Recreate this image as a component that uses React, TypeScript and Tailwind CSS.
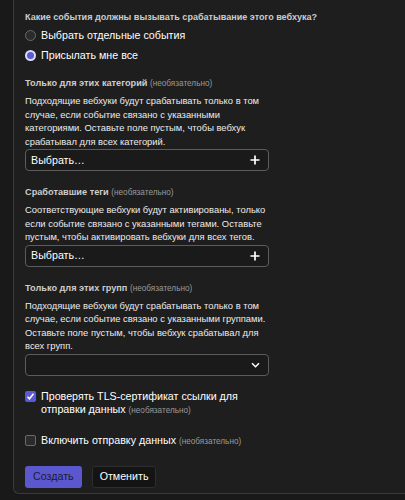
import React from "react";

const font = { fontFamily: '"Liberation Sans", Arial, sans-serif' };

function Optional() {
    return <span className="text-[8.2px] font-normal text-[#9a9a9a]">(необязательно)</span>;
}

function Radio({ checked, label }: { checked?: boolean; label: string }) {
    return (
        <label className="flex items-center gap-[5px] h-[20px]">
            {checked ? (
                <span className="w-[11px] h-[11px] rounded-full bg-[#dcdcf4] flex items-center justify-center">
                    <span className="w-[7px] h-[7px] rounded-full bg-[#5b59d8]" />
                </span>
            ) : (
                <span className="w-[11px] h-[11px] rounded-full border border-[#6a6a6a] bg-[#2b2b2d]" />
            )}
            <span className="text-[10.7px] text-white">{label}</span>
        </label>
    );
}

function Field({
    title,
    text,
    control,
    className,
}: {
    title: string;
    text: string;
    control: "plus" | "chevron";
    className: string;
}) {
    return (
        <div className={"flex flex-col " + className}>
            <div className="text-[9.2px] font-bold text-[#cccccc] leading-[12px]">
                {title} <Optional />
            </div>
            <p className="mt-[4px] text-[9.4px] leading-[13.5px] text-[#ececec]">{text}</p>
            <div className="mt-[1px] h-[22px] rounded-[4px] border border-[#5c5c5c] bg-[#1a1a1a] flex items-center justify-between pl-[5px] pr-[8px]">
                <span className="text-[10.7px] text-white">{control === "plus" ? "Выбрать…" : ""}</span>
                {control === "plus" ? (
                    <svg width="10" height="10" viewBox="0 0 10 10">
                        <path d="M5 0.5v9M0.5 5h9" stroke="white" strokeWidth="1.7" />
                    </svg>
                ) : (
                    <svg width="9" height="6" viewBox="0 0 9 6">
                        <path d="M1 1.2l3.5 3.5 3.5-3.5" fill="none" stroke="white" strokeWidth="1.5" />
                    </svg>
                )}
            </div>
        </div>
    );
}

export default function App() {
    return (
        <div className="w-[405px] h-[500px] bg-[#191919] overflow-hidden" style={font}>
            <div className="ml-[13px] h-[494px] bg-[#1e1e1e] border-l border-b border-[#3a3a3a] rounded-bl-[6px] pl-[11px] pt-[11px]">
                <div className="w-[244px] flex flex-col">
                    <div className="text-[9.05px] font-bold text-[#cccccc] leading-[12px] whitespace-nowrap">
                        Какие события должны вызывать срабатывание этого вебхука?
                    </div>
                    <div className="mt-[2px] flex flex-col">
                        <Radio label="Выбрать отдельные события" />
                        <Radio checked label="Присылать мне все" />
                    </div>
                    <Field
                        className="mt-[12px]"
                        title="Только для этих категорий"
                        text="Подходящие вебхуки будут срабатывать только в том случае, если событие связано с указанными категориями. Оставьте поле пустым, чтобы вебхук срабатывал для всех категорий."
                        control="plus"
                    />
                    <Field
                        className="mt-[15px]"
                        title="Сработавшие теги"
                        text="Соответствующие вебхуки будут активированы, только если событие связано с указанными тегами. Оставьте пустым, чтобы активировать вебхуки для всех тегов."
                        control="plus"
                    />
                    <Field
                        className="mt-[15px]"
                        title="Только для этих групп"
                        text="Подходящие вебхуки будут срабатывать только в том случае, если событие связано с указанными группами. Оставьте поле пустым, чтобы вебхук срабатывал для всех групп."
                        control="chevron"
                    />
                    <label className="mt-[14px] flex items-start gap-[5px]">
                        <span className="mt-[1px] w-[11px] h-[11px] shrink-0 rounded-[2px] bg-[#5b59d8] flex items-center justify-center">
                            <svg width="9" height="9" viewBox="0 0 9 9">
                                <path d="M1.5 4.8l2 2 4-5" fill="none" stroke="white" strokeWidth="1.5" />
                            </svg>
                        </span>
                        <span className="text-[10.7px] leading-[13px] text-white">
                            Проверять TLS-сертификат ссылки для отправки данных <Optional />
                        </span>
                    </label>
                    <label className="mt-[17px] flex items-start gap-[5px] whitespace-nowrap">
                        <span className="mt-[1px] w-[11px] h-[11px] shrink-0 rounded-[2px] border border-[#6a6a6a] bg-[#2b2b2d]" />
                        <span className="text-[10.7px] leading-[13px] text-white">
                            Включить отправку данных <Optional />
                        </span>
                    </label>
                    <div className="mt-[18px] flex gap-[10px]">
                        <button className="h-[22px] px-[8px] rounded-[3px] bg-[#5b57cf] text-[10.7px] text-[#1c1c2e]">
                            Создать
                        </button>
                        <button className="h-[22px] px-[7px] rounded-[3px] bg-[#141414] border border-[#2e2e2e] text-[10.7px] text-white">
                            Отменить
                        </button>
                    </div>
                </div>
            </div>
        </div>
    );
}
